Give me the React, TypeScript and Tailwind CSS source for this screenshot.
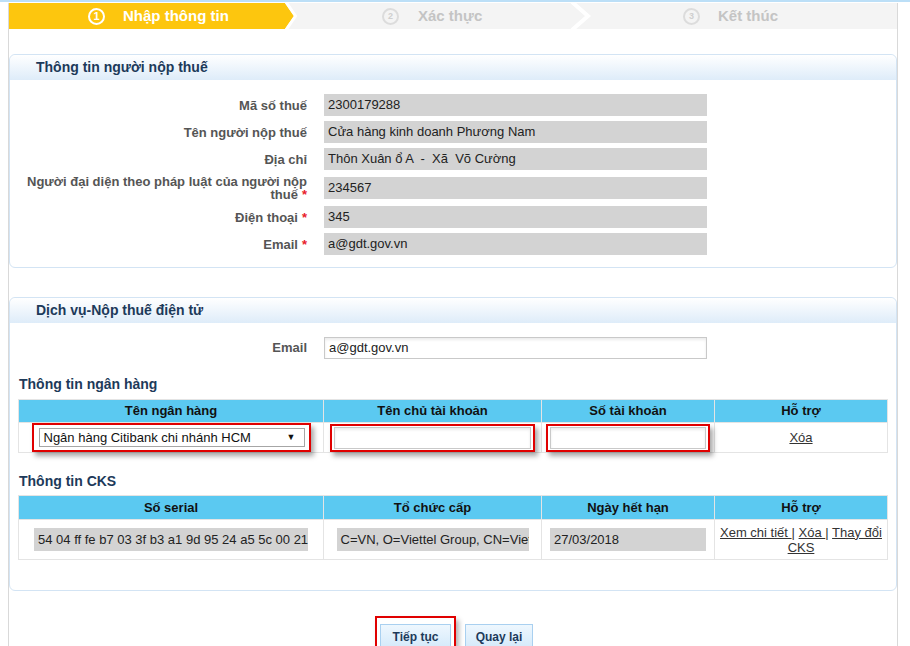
import React from "react";

const StepCircle = ({ n, active }: { n: number; active?: boolean }) => (
  <span
    className={
      active
        ? "w-[17px] h-[17px] rounded-full border-2 border-white text-white text-[11px] font-bold flex items-center justify-center leading-none"
        : "w-[17px] h-[17px] rounded-full border-2 border-[#dcdcdc] text-[#cfcfcf] text-[9px] font-bold flex items-center justify-center leading-none"
    }
  >
    {n}
  </span>
);

const InfoRow = ({
  label,
  value,
  req,
}: {
  label: string;
  value: string;
  req?: boolean;
}) => (
  <div className="flex items-center">
    <div className="w-[290px] ml-[7px] text-right font-bold text-[13px] leading-[13px] text-[#555]">
      {label}
      {req && <span className="text-[#e8202a] ml-[4px]">*</span>}
    </div>
    <div className="ml-[17px] w-[383px] h-[22px] bg-[#d3d3d3] px-[4px] flex items-center text-[13px] text-[#222] whitespace-pre">
      {value}
    </div>
  </div>
);

const SectionHeader = ({ title }: { title: string }) => (
  <div className="h-[25px] rounded-t-[6px] bg-gradient-to-b from-white to-[#deecf9] flex items-center pl-[26px] text-[14px] font-bold text-[#1d3a5a]">
    {title}
  </div>
);

const RedBox = ({ children, className }: { children: React.ReactNode; className: string }) => (
  <div
    className={
      "flex border-2 border-[#e00000] shadow-[3px_4px_5px_rgba(0,0,0,0.35)] bg-white " +
      className
    }
  >
    {children}
  </div>
);

const TextInput = ({ w }: { w: string }) => (
  <div className={"h-[22px] border border-[#c9c9c9] bg-white shadow-[inset_0_2px_3px_rgba(0,0,0,0.08)] " + w} />
);

const Th = ({ children }: { children: React.ReactNode }) => (
  <th className="border border-[#e4e4e4] font-bold text-[13px] text-[#111] p-0">{children}</th>
);

export default function App() {
  return (
    <div className="w-[910px] h-[646px] overflow-hidden bg-white font-['Liberation_Sans',Arial,sans-serif] text-[13px] text-[#222]">
      <div className="h-[2px] bg-[#bcdff7]" />
      <div className="ml-[8px] mt-px w-[890px] h-[700px] border-x border-[#d9d9d9]">
        {/* steps */}
        <div className="relative flex h-[26px]">
          <div className="w-[271px] bg-[#fdc60e] flex items-center pl-[79px] gap-[18px]">
            <StepCircle n={1} active />
            <span className="text-white font-bold text-[15px]">Nhập thông tin</span>
          </div>
          <div className="w-[290px] bg-[#f4f4f4] flex items-center pl-[102px] gap-[19px]">
            <StepCircle n={2} />
            <span className="text-[#c4c4c4] font-bold text-[15px]">Xác thực</span>
          </div>
          <div className="flex-1 bg-[#f4f4f4] flex items-center pl-[113px] gap-[18px]">
            <StepCircle n={3} />
            <span className="text-[#c4c4c4] font-bold text-[15px]">Kết thúc</span>
          </div>
          <svg className="absolute left-[271px] top-0" width="18" height="26" viewBox="0 0 18 26">
            <polygon points="0,0 5,0 14,13 5,26 0,26" fill="#fdc60e" />
            <polyline points="6,-1 15.5,13 6,27" fill="none" stroke="#ffffff" strokeWidth="3" />
          </svg>
          <svg className="absolute left-[559px] top-0" width="26" height="26" viewBox="0 0 26 26">
            <polyline points="4,-1 20,13 4,27" fill="none" stroke="#ffffff" strokeWidth="4" />
          </svg>
        </div>

        {/* section 1 */}
        <div className="mt-[25px] border border-[#d3e4f4] rounded-[6px]">
          <SectionHeader title="Thông tin người nộp thuế" />
          <div className="pt-[14px] pb-[12px] flex flex-col gap-[5px]">
            <InfoRow label="Mã số thuế" value="2300179288" />
            <InfoRow label="Tên người nộp thuế" value="Cửa hàng kinh doanh Phương Nam" />
            <InfoRow label="Địa chỉ" value="Thôn Xuân ổ A  -  Xã  Võ Cường" />
            <InfoRow label="Người đại diện theo pháp luật của người nộp thuế" value="234567" req />
            <InfoRow label="Điện thoại" value="345" req />
            <InfoRow label="Email" value="a@gdt.gov.vn" req />
          </div>
        </div>

        {/* section 2 */}
        <div className="mt-[29px] border border-[#d3e4f4] rounded-[6px] pb-[30px]">
          <SectionHeader title="Dịch vụ-Nộp thuế điện tử" />
          <div className="pt-[14px] flex items-center">
            <div className="w-[290px] ml-[7px] text-right font-bold text-[13px] text-[#555]">Email</div>
            <div className="ml-[17px] w-[383px] h-[22px] border border-[#c9c9c9] bg-white shadow-[inset_0_2px_3px_rgba(0,0,0,0.08)] px-[4px] flex items-center text-[13px]">
              a@gdt.gov.vn
            </div>
          </div>

          <div className="mt-[18px] ml-[9px] font-bold text-[14px] leading-[15px] text-[#1d3a5a]">
            Thông tin ngân hàng
          </div>
          <table className="mt-[7px] ml-[8px] w-[869px] border-collapse table-fixed">
            <colgroup>
              <col className="w-[305px]" />
              <col className="w-[218px]" />
              <col className="w-[173px]" />
              <col className="w-[173px]" />
            </colgroup>
            <thead>
              <tr className="h-[23px] bg-[#5bc9f1]">
                <Th>Tên ngân hàng</Th>
                <Th>Tên chủ tài khoản</Th>
                <Th>Số tài khoản</Th>
                <Th>Hỗ trợ</Th>
              </tr>
            </thead>
            <tbody>
              <tr className="h-[30px]">
                <td className="border border-[#e4e4e4] p-0 align-middle">
                  <div className="flex justify-center">
                    <RedBox className="pl-[5px] pr-[4px] py-[3px]">
                      <div className="w-[266px] h-[19px] border border-[#a6a6a6] bg-white flex items-center justify-between pl-[4px] pr-[8px] text-[13px] text-[#111]">
                        <span>Ngân hàng Citibank chi nhánh HCM</span>
                        <span className="text-[9px]">▼</span>
                      </div>
                    </RedBox>
                  </div>
                </td>
                <td className="border border-[#e4e4e4] p-0 align-middle">
                  <div className="flex justify-center">
                    <RedBox className="px-[2px] py-px">
                      <TextInput w="w-[197px]" />
                    </RedBox>
                  </div>
                </td>
                <td className="border border-[#e4e4e4] p-0 align-middle">
                  <div className="flex justify-center">
                    <RedBox className="px-[2px] py-px">
                      <TextInput w="w-[156px]" />
                    </RedBox>
                  </div>
                </td>
                <td className="border border-[#e4e4e4] p-0 text-center align-middle">
                  <a className="underline text-[#333] text-[13px]">Xóa</a>
                </td>
              </tr>
            </tbody>
          </table>

          <div className="mt-[21px] ml-[9px] font-bold text-[14px] leading-[15px] text-[#1d3a5a]">
            Thông tin CKS
          </div>
          <table className="mt-[6px] ml-[8px] w-[869px] border-collapse table-fixed">
            <colgroup>
              <col className="w-[305px]" />
              <col className="w-[218px]" />
              <col className="w-[173px]" />
              <col className="w-[173px]" />
            </colgroup>
            <thead>
              <tr className="h-[24px] bg-[#5bc9f1]">
                <Th>Số serial</Th>
                <Th>Tổ chức cấp</Th>
                <Th>Ngày hết hạn</Th>
                <Th>Hỗ trợ</Th>
              </tr>
            </thead>
            <tbody>
              <tr className="h-[40px]">
                <td className="border border-[#e4e4e4] p-0 align-middle">
                  <div className="mx-auto w-[274px] h-[23px] bg-[#d3d3d3] px-[4px] flex items-center overflow-hidden whitespace-nowrap text-[13px]">
                    54 04 ff fe b7 03 3f b3 a1 9d 95 24 a5 5c 00 21 9a
                  </div>
                </td>
                <td className="border border-[#e4e4e4] p-0 align-middle">
                  <div className="mx-auto w-[192px] h-[23px] bg-[#d3d3d3] px-[4px] flex items-center overflow-hidden whitespace-nowrap text-[13px]">
                    C=VN, O=Viettel Group, CN=Viettel-CA
                  </div>
                </td>
                <td className="border border-[#e4e4e4] p-0 align-middle">
                  <div className="mx-auto w-[156px] h-[23px] bg-[#d3d3d3] px-[4px] flex items-center text-[13px]">
                    27/03/2018
                  </div>
                </td>
                <td className="border border-[#e4e4e4] align-middle text-center text-[13px] leading-[15px] text-[#333] px-[4px] py-0">
                  <a className="underline">Xem chi tiết </a>| <a className="underline">Xóa </a>|{" "}
                  <a className="underline">Thay đổi CKS</a>
                </td>
              </tr>
            </tbody>
          </table>
        </div>

        {/* buttons */}
        <div className="mt-[25px] flex justify-center items-start gap-[9px] pl-[2px]">
          <div className="border-2 border-[#e00000] px-[3px] pt-[6px] pb-[3px] shadow-[3px_4px_5px_rgba(0,0,0,0.3)]">
            <button className="w-[71px] h-[26px] border border-[#a9d0f0] bg-gradient-to-b from-[#eef7fe] to-[#d3e9fa] text-[12px] font-bold text-[#1d3a5a]">
              Tiếp tục
            </button>
          </div>
          <button className="mt-[8px] w-[68px] h-[26px] border border-[#a9d0f0] bg-gradient-to-b from-[#eef7fe] to-[#d3e9fa] text-[12px] font-bold text-[#1d3a5a]">
            Quay lại
          </button>
        </div>
      </div>
    </div>
  );
}
